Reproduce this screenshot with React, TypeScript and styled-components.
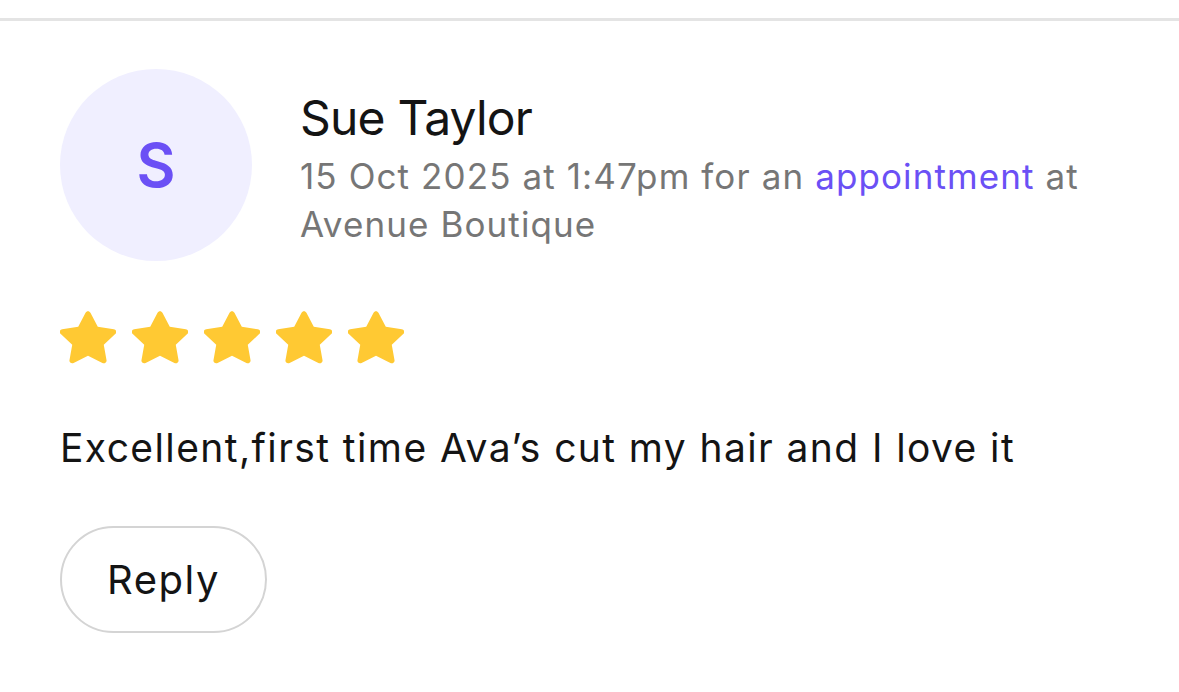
import React from "react";
import styled, { createGlobalStyle } from "styled-components";

const GlobalStyle = createGlobalStyle`
  html, body {
    margin: 0;
    padding: 0;
    background: #fff;
  }
  body {
    font-family: Inter, "Noto Sans", sans-serif;
    color: #141414;
  }
`;

const Page = styled.div`
  width: 1179px;
  height: 692px;
  overflow: hidden;
  padding-top: 18px;
  box-sizing: border-box;
`;

const Divider = styled.div`
  height: 3px;
  background: #e4e4e4;
`;

const Card = styled.div`
  padding: 48px 60px 0 60px;
  display: flex;
  flex-direction: column;
`;

const Header = styled.div`
  display: flex;
  gap: 48px;
  align-items: flex-start;
`;

const Avatar = styled.div`
  width: 192px;
  height: 192px;
  border-radius: 50%;
  background: #f0efff;
  color: #6b50f5;
  display: flex;
  align-items: center;
  justify-content: center;
  font-size: 60px;
  font-weight: 600;
  flex-shrink: 0;
`;

const Info = styled.div`
  display: flex;
  flex-direction: column;
  padding-top: 20px;
`;

const Name = styled.div`
  font-size: 48px;
  line-height: 58px;
  font-weight: 400;
  color: #141414;
  letter-spacing: -0.8px;
`;

const Meta = styled.div`
  margin-top: 5px;
  font-size: 35px;
  line-height: 48px;
  color: #767676;
  letter-spacing: 1.1px;
  max-width: 820px;
`;

const Link = styled.span`
  color: #6b50f5;
`;

const Stars = styled.div`
  display: flex;
  gap: 16px;
  margin-top: 50px;
`;

const Review = styled.p`
  margin: 60px 0 0 0;
  font-size: 39px;
  line-height: 48px;
  color: #141414;
  letter-spacing: 1.4px;
  white-space: nowrap;
`;

const ReplyButton = styled.button`
  margin-top: 54px;
  align-self: flex-start;
  width: 207px;
  height: 107px;
  border: 2px solid #d4d4d4;
  border-radius: 54px;
  background: #fff;
  font-family: inherit;
  font-size: 40px;
  color: #141414;
  letter-spacing: 1.5px;
  padding: 0;
`;

const Star = () => (
  <svg width="56" height="53" viewBox="1.7 1.5 20.6 20.4" preserveAspectRatio="none">
    <path
      d="M12 1.6c.4 0 .7.2.9.6l2.7 5.4 5.9.9c.9.1 1.2 1.2.6 1.8l-4.3 4.2 1 5.9c.2.9-.8 1.5-1.5 1.1L12 18.7l-5.3 2.8c-.8.4-1.7-.2-1.5-1.1l1-5.9-4.3-4.2c-.6-.6-.3-1.7.6-1.8l5.9-.9 2.7-5.4c.2-.4.5-.6.9-.6z"
      fill="#ffc933"
    />
  </svg>
);

export default function App() {
  return (
    <Page>
      <GlobalStyle />
      <Divider />
      <Card>
        <Header>
          <Avatar>S</Avatar>
          <Info>
            <Name>Sue Taylor</Name>
            <Meta>
              15 Oct 2025 at 1:47pm for an <Link>appointment</Link> at Avenue
              Boutique
            </Meta>
          </Info>
        </Header>
        <Stars>
          {[0, 1, 2, 3, 4].map((i) => (
            <Star key={i} />
          ))}
        </Stars>
        <Review>Excellent,first time Ava’s cut my hair and I love it</Review>
        <ReplyButton>Reply</ReplyButton>
      </Card>
    </Page>
  );
}
